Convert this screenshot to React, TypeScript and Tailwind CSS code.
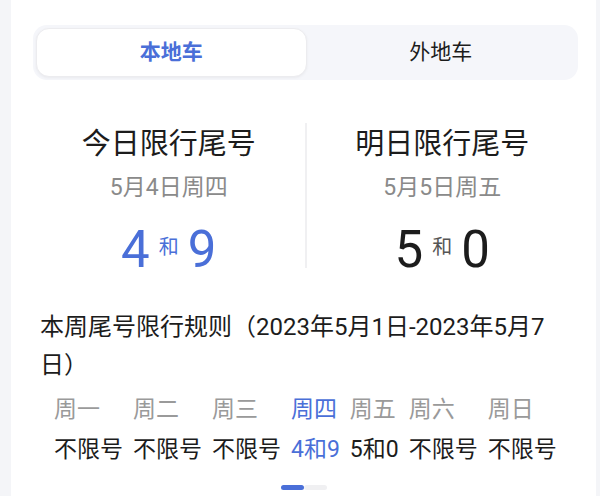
import React, { useState } from "react";

type Day = { label: string; value: string; today?: boolean };

const WEEK: Day[] = [
  { label: "周一", value: "不限号" },
  { label: "周二", value: "不限号" },
  { label: "周三", value: "不限号" },
  { label: "周四", value: "4和9", today: true },
  { label: "周五", value: "5和0" },
  { label: "周六", value: "不限号" },
  { label: "周日", value: "不限号" },
];

// latin digits from Roboto, han from Noto CJK
const FONT = { fontFamily: 'Roboto, "Noto Sans CJK SC", sans-serif' };

function Plate({ title, date, a, b, active }: { title: string; date: string; a: string; b: string; active?: boolean }) {
  return (
    <div className="flex flex-1 flex-col items-center">
      <div className="text-[29px] leading-[36px] text-[#1c1c1c] mt-[3px]">{title}</div>
      <div className="text-[23px] leading-[28px] text-[#8a8a8a] mt-[12px]">{date}</div>
      <div className={`flex items-center gap-[9px] mt-[18px] ${active ? "text-[#4a6fd8]" : "text-[#1c1c1c]"}`}>
        <span className="text-[51px] leading-[60px]">{a}</span>
        <span className={`text-[20px] leading-[24px] mb-[6px] ${active ? "text-[#4a6fd8]" : "text-[#555]"}`}>和</span>
        <span className="text-[51px] leading-[60px]">{b}</span>
      </div>
    </div>
  );
}

export default function App() {
  const [tab, setTab] = useState(0);

  return (
    <div className="w-[600px] h-[496px] overflow-hidden bg-[#f4f5f8] pl-[11px] pr-[4px]" style={FONT}>
      <div className="h-full bg-white pt-[25px]">
        {/* tabs */}
        <div className="mx-[22px] w-[545px] h-[55px] rounded-[14px] bg-[#f5f6fa] p-[3px] flex">
          {["本地车", "外地车"].map((t, i) => (
            <button
              key={t}
              onClick={() => setTab(i)}
              className={`flex-1 rounded-[13px] text-[21px] ${
                tab === i
                  ? "bg-white border border-[#ececef] shadow-[0_1px_3px_rgba(0,0,0,0.05)] text-[#4a6fd8] font-bold"
                  : "text-[#1c1c1c]"
              }`}
            >
              {t}
            </button>
          ))}
        </div>

        {/* today / tomorrow */}
        <div className="mx-[22px] w-[545px] flex mt-[43px]">
          <Plate title="今日限行尾号" date="5月4日周四" a="4" b="9" active />
          <div className="w-[2px] h-[145px] bg-[#f0f0f2]" />
          <Plate title="明日限行尾号" date="5月5日周五" a="5" b="0" />
        </div>

        {/* weekly rule */}
        <div className="ml-[29px] w-[520px] mt-[28px] text-[24px] leading-[38px] text-[#1c1c1c]">
          本周尾号限行规则（2023年5月1日-2023年5月7日）
        </div>
        <div className="ml-[43px] mt-[11px] flex gap-[10px]">
          {WEEK.map((d) => (
            <div key={d.label} className="flex flex-col text-[23px]">
              <span className={`leading-[30px] ${d.today ? "text-[#4a6fd8]" : "text-[#9a9a9a]"}`}>{d.label}</span>
              <span className={`leading-[30px] mt-[10px] ${d.today ? "text-[#4a6fd8]" : "text-[#1c1c1c]"}`}>{d.value}</span>
            </div>
          ))}
        </div>

        {/* pager */}
        <div className="flex justify-center mt-[20px]">
          <div className="w-[23px] h-[5px] rounded-full bg-[#4a6fd8]" />
          <div className="w-[23px] h-[5px] rounded-full bg-[#f0f0f2]" />
        </div>
      </div>
    </div>
  );
}
